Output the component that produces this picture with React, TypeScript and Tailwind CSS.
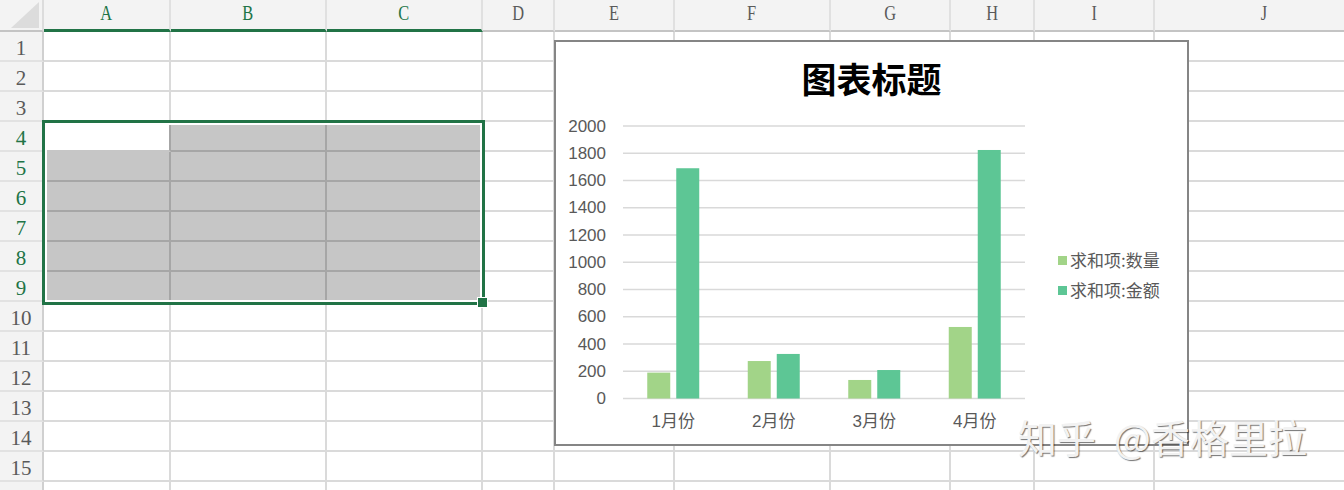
import React from "react";

const colLetters = ["A", "B", "C", "D", "E", "F", "G", "H", "I", "J"];
const colW = [
  "w-[127px]",
  "w-[156px]",
  "w-[156px]",
  "w-[72px]",
  "w-[120px]",
  "w-[156px]",
  "w-[120px]",
  "w-[84px]",
  "w-[120px]",
  "w-[220px]",
];
const rows = Array.from({ length: 16 }, (_, i) => i + 1);

function HeaderRow() {
  return (
    <div className="flex h-[32px] shrink-0">
      <div className="w-[44px] h-[32px] shrink-0 bg-[#f3f3f3] border-r-2 border-b-2 border-r-[#dcdcdc] border-b-[#c4c4c4] relative">
        <svg width="42" height="30" className="block">
          <polygon points="11,28 39,28 39,2" fill="#dcdcdc" />
        </svg>
      </div>
      {colLetters.map((l, i) => {
        const sel = i < 3;
        return (
          <div
            key={l}
            className={`${colW[i]} shrink-0 h-[32px] bg-[#f3f3f3] border-r-2 border-r-[#e0e0e0] flex items-center justify-center pb-[4px] ${
              sel ? "border-b-[3px] border-b-[#217346] text-[#217346]" : "border-b-2 border-b-[#c4c4c4] text-[#5a5a5a]"
            }`}
          >
            <span className="inline-block scale-x-[0.82] text-[20px] leading-[24px] font-['Liberation_Serif',serif]">{l}</span>
          </div>
        );
      })}
    </div>
  );
}

function BodyRow({ r }: { r: number }) {
  const selRow = r >= 4 && r <= 9;
  return (
    <div className="flex h-[30px] shrink-0">
      <div
        className={`w-[44px] shrink-0 h-[30px] bg-[#f3f3f3] border-r-2 border-r-[#d0d0d0] border-b-2 border-b-[#e2e2e2] flex items-center justify-center pt-[4px] text-[21px] leading-[24px] font-['Liberation_Serif',serif] ${
          selRow ? "text-[#217346]" : "text-[#5a5a5a]"
        }`}
      >
        {r <= 15 ? r : ""}
      </div>
      {colLetters.map((l, i) => {
        const inSel = selRow && i < 3;
        const active = r === 4 && i === 0;
        let cls = "bg-white border-r-2 border-b-2 border-[#dadada]";
        if (inSel && !active) cls = "bg-[#c6c6c6] border-r-2 border-b-2 border-[#a6a6a6]";
        if (active) cls = "bg-white border-r-2 border-b-2 border-r-[#a6a6a6] border-b-[#c6c6c6]";
        return <div key={l} className={`${colW[i]} shrink-0 h-[30px] ${cls}`} />;
      })}
    </div>
  );
}

const ticks = [2000, 1800, 1600, 1400, 1200, 1000, 800, 600, 400, 200, 0];
const cats = ["1月份", "2月份", "3月份", "4月份"];
const qty = [190, 275, 136, 525];
const amt = [1690, 327, 209, 1824];
const LIGHT = "#a2d488";
const DARK = "#5dc695";

function Chart() {
  const top = 14;
  const step = 27.25;
  const zeroY = top + step * 10;
  const scale = step / 200;
  const x0 = 67;
  const x1 = 469;
  const gw = (x1 - x0) / 4;
  return (
    <div className="absolute left-[554px] top-[40px] w-[635px] h-[406px] border-2 border-[#858585] bg-white flex flex-col">
      <div className="h-[70px] shrink-0 pt-[16px] text-center text-[35px] leading-[40px] font-bold text-black font-['Noto_Sans_CJK_SC',sans-serif]">
        图表标题
      </div>
      <div className="flex">
        <svg width="480" height="332" className="block shrink-0">
          {ticks.map((t, i) => {
            const y = top + i * step;
            return (
              <line key={"g" + t} x1={x0} x2={x1} y1={y} y2={y} stroke="#d9d9d9" strokeWidth={1.6} />
            );
          })}
          {ticks.map((t, i) => {
            const y = top + i * step;
            return (
              <text
                key={"t" + t}
                x={50}
                y={y}
                textAnchor="end"
                dominantBaseline="central"
                fill="#595959"
                fontSize={17}
                fontFamily="'Liberation Sans', Arial, sans-serif"
              >
                {t}
              </text>
            );
          })}
          {cats.map((c, i) => {
            const cx = x0 + gw * (i + 0.5);
            const hq = qty[i] * scale;
            const ha = amt[i] * scale;
            return (
              <g key={c}>
                <rect x={cx - 26} y={zeroY - hq} width={23} height={hq} fill={LIGHT} />
                <rect x={cx + 3} y={zeroY - ha} width={23} height={ha} fill={DARK} />
                <text
                  x={cx}
                  y={309}
                  textAnchor="middle"
                  dominantBaseline="central"
                  fill="#595959"
                  fontSize={17}
                  fontFamily="'Liberation Sans', 'Noto Sans CJK SC', sans-serif"
                >
                  {c}
                </text>
              </g>
            );
          })}
        </svg>
        <div className="flex flex-col pl-[22px] pt-[133px] text-[17px] text-[#595959] font-['Noto_Sans_CJK_SC',sans-serif]">
          <div className="h-[30px] flex items-center gap-[3px]">
            <span className="w-[9px] h-[9px] bg-[#a2d488] shrink-0" />
            <span className="leading-[20px] whitespace-nowrap">求和项:数量</span>
          </div>
          <div className="h-[30px] flex items-center gap-[3px]">
            <span className="w-[9px] h-[9px] bg-[#5dc695] shrink-0" />
            <span className="leading-[20px] whitespace-nowrap">求和项:金额</span>
          </div>
        </div>
      </div>
    </div>
  );
}

export default function App() {
  return (
    <div className="w-[1344px] h-[490px] overflow-hidden relative bg-white">
      <div className="flex flex-col w-[1400px]">
        <HeaderRow />
        {rows.map((r) => (
          <BodyRow key={r} r={r} />
        ))}
      </div>
      {/* selection */}
      <div className="absolute left-[42px] top-[120px] w-[443px] h-[185px] border-[3px] border-[#217346] shadow-[inset_0_0_0_2px_#ffffff]" />
      <div className="absolute left-[477px] top-[297px] w-[11px] h-[11px] bg-[#217346] border border-white" />
      <Chart />
      <div className="absolute left-[1018px] top-[414px] flex items-center whitespace-nowrap text-[39px] leading-[44px] text-[#f2f2f2] font-['Noto_Sans_CJK_SC',sans-serif] [text-shadow:1px_1px_1px_rgba(0,0,0,0.55)]">
        <span>知乎</span>
        <span className="ml-[18px]">@香格里拉</span>
      </div>
    </div>
  );
}
